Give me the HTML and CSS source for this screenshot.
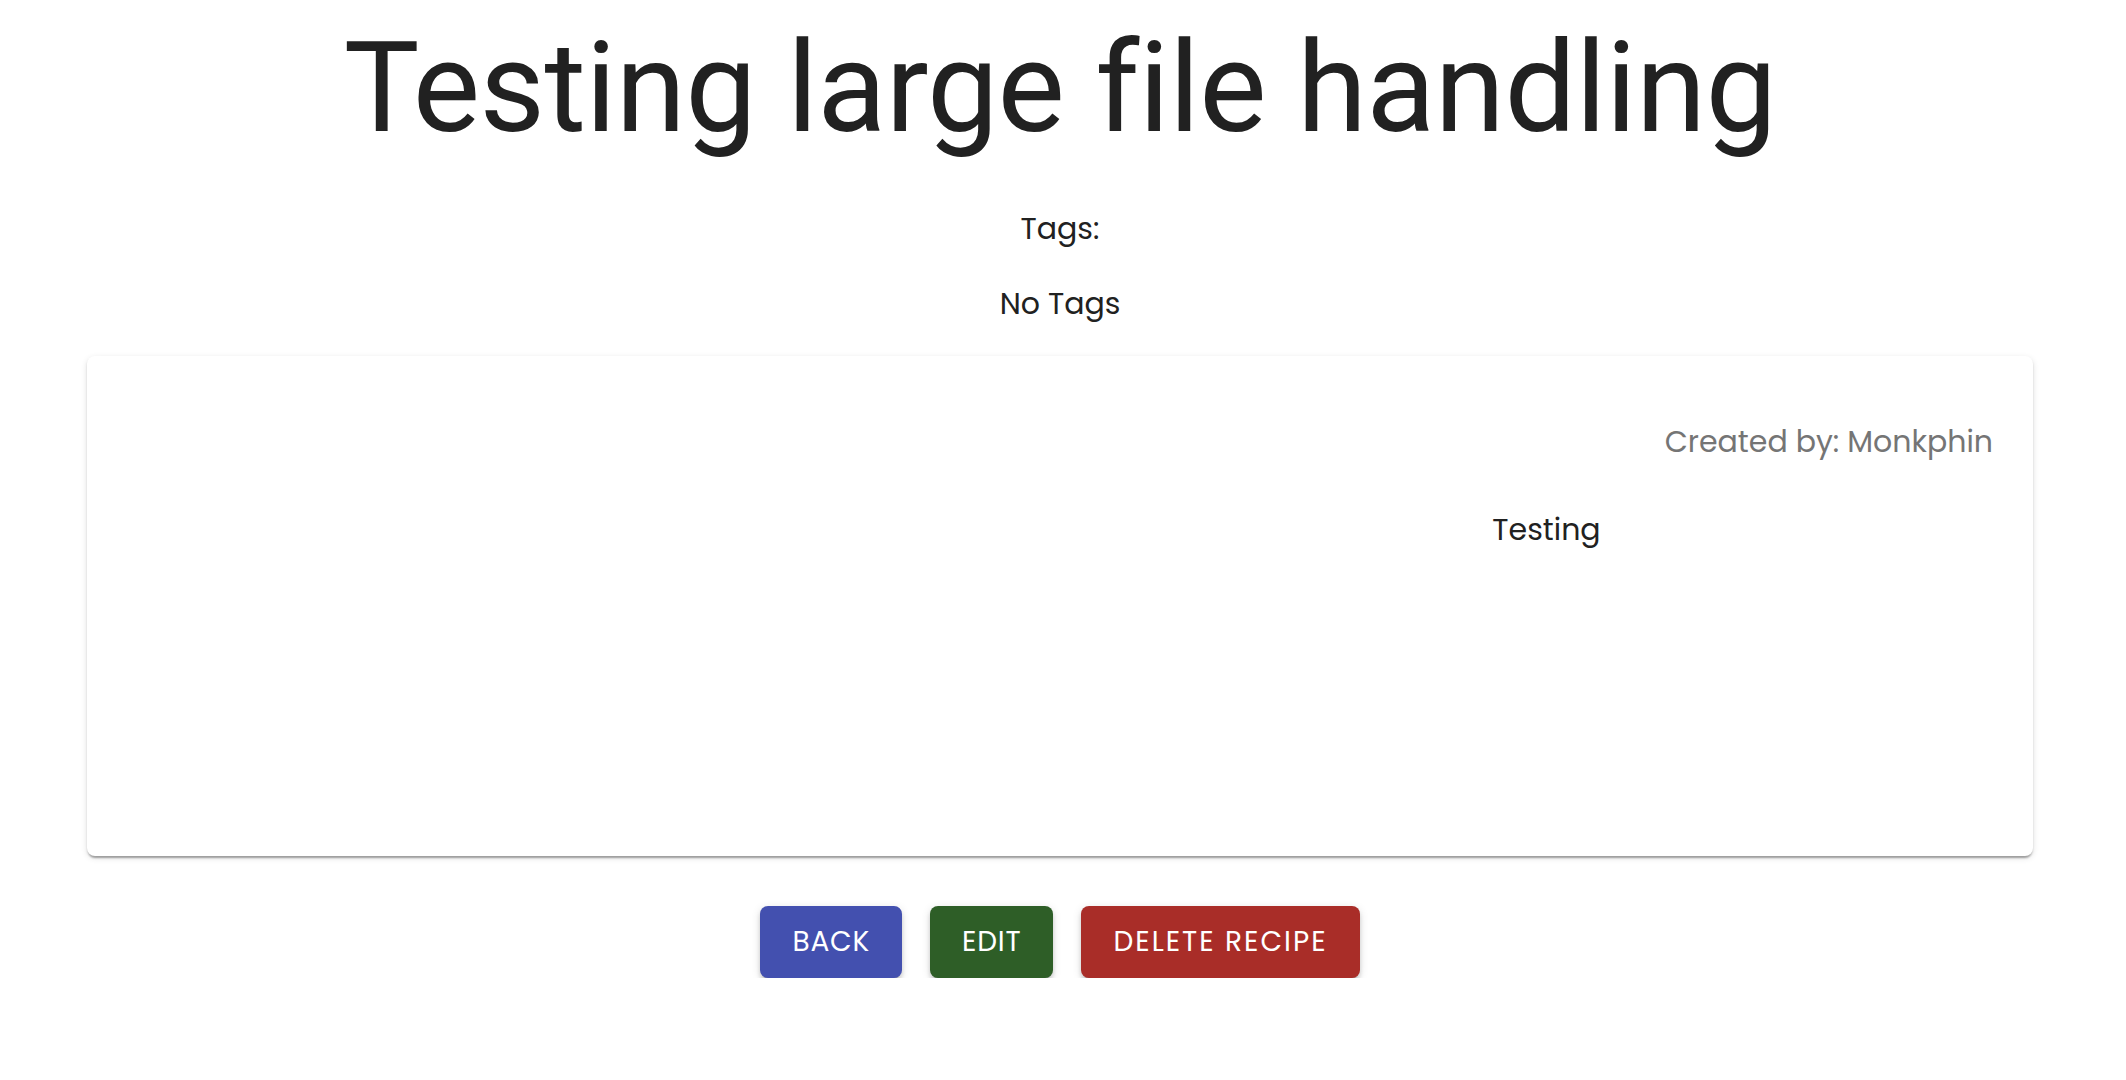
FILE: index.html
```html
<!DOCTYPE html>
<html lang="en">
<head>
<meta charset="utf-8">
<title>Testing large file handling</title>
<link rel="stylesheet" href="styles.css">
</head>
<body>
<div class="page">
  <h1 class="title">Testing large file handling</h1>
  <p class="tags-label">Tags:</p>
  <p class="tags-value">No Tags</p>
  <div class="card">
    <div class="card-media"></div>
    <div class="card-body">
      <p class="created">Created by: Monkphin</p>
      <p class="description">Testing</p>
    </div>
  </div>
  <div class="actions">
    <button class="btn btn-back">Back</button>
    <button class="btn btn-edit">Edit</button>
    <button class="btn btn-delete">Delete Recipe</button>
  </div>
</div>
</body>
</html>
```

FILE: styles.css
```css
html, body {
  margin: 0;
  padding: 0;
  background: #ffffff;
}

.page {
  width: 2120px;
  padding-top: 12px;
  display: flex;
  flex-direction: column;
  align-items: center;
  font-family: "Poppins", "Inter", "Noto Sans", sans-serif;
  color: #212121;
}

.title {
  margin: 0 0 41px 0;
  font-family: "Roboto", "Liberation Sans", sans-serif;
  font-weight: 400;
  font-size: 127px;
  line-height: 1.2;
  letter-spacing: -0.6px;
  color: #212121;
  text-align: center;
}

.tags-label,
.tags-value {
  margin: 0;
  font-size: 30px;
  line-height: 48px;
  text-align: center;
}

.tags-value {
  margin-top: 27px;
}

.card {
  box-sizing: border-box;
  margin-top: 28px;
  width: 1946px;
  height: 500px;
  background: #ffffff;
  border-radius: 8px;
  box-shadow: 0 4px 2px -2px rgba(0, 0, 0, 0.22),
              0 2px 2px 0 rgba(0, 0, 0, 0.14),
              0 2px 6px 0 rgba(0, 0, 0, 0.12);
  display: grid;
  grid-template-columns: 1fr 1fr;
}

.card-body {
  padding-top: 62px;
  display: flex;
  flex-direction: column;
}

.created {
  margin: 0;
  padding-right: 40px;
  font-size: 30px;
  line-height: 48px;
  text-align: right;
  color: #757575;
}

.description {
  margin: 40px 0 0 0;
  font-size: 30px;
  line-height: 48px;
  text-align: center;
  color: #212121;
}

.actions {
  margin-top: 50px;
  display: flex;
  gap: 28px;
  justify-content: center;
}

.btn {
  height: 72px;
  padding: 0 32px;
  border: none;
  border-radius: 8px;
  font-family: "Poppins", "Roboto", sans-serif;
  font-weight: 400;
  font-size: 28px;
  letter-spacing: 0.8px;
  text-transform: uppercase;
  color: #ffffff;
  box-shadow: 0 6px 2px -4px rgba(0, 0, 0, 0.2),
              0 4px 4px 0 rgba(0, 0, 0, 0.14),
              0 2px 10px 0 rgba(0, 0, 0, 0.12);
  cursor: pointer;
}

.btn-back {
  background: #4350af;
}

.btn-edit {
  background: #2e5e27;
}

.btn-delete {
  background: #a92d28;
  letter-spacing: 2px;
}
```
